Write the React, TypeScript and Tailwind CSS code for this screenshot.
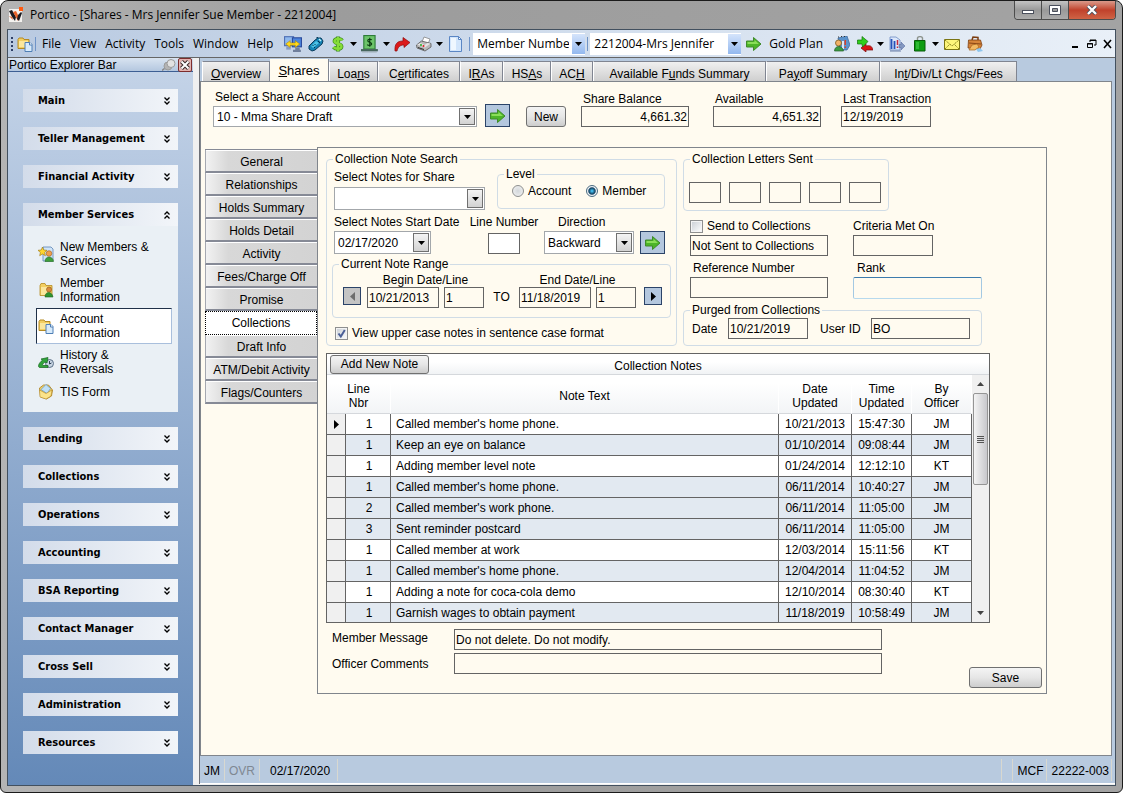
import { useState } from "react";
import type { ReactNode } from "react";
import clsx from "clsx";

const explorerTop = ["Main", "Teller Management", "Financial Activity"];

const explorerBottom = [
  "Lending",
  "Collections",
  "Operations",
  "Accounting",
  "BSA Reporting",
  "Contact Manager",
  "Cross Sell",
  "Administration",
  "Resources",
];

// "_" goes before the access key letter
const pageTabs = [
  { label: "_Overview", width: "w-[68px]" },
  { label: "_Shares", width: "w-[59px]" },
  { label: "Loa_ns", width: "w-[49px]" },
  { label: "C_ertificates", width: "w-[82px]" },
  { label: "I_RAs", width: "w-[43px]" },
  { label: "HS_As", width: "w-[48px]" },
  { label: "AC_H", width: "w-[42px]" },
  { label: "Available F_unds Summary", width: "w-[173px]" },
  { label: "Pa_yoff Summary", width: "w-[114px]" },
  { label: "In_t/Div/Lt Chgs/Fees", width: "w-[137px]" },
];

const sideTabs = [
  "General",
  "Relationships",
  "Holds Summary",
  "Holds Detail",
  "Activity",
  "Fees/Charge Off",
  "Promise",
  "Collections",
  "Draft Info",
  "ATM/Debit Activity",
  "Flags/Counters",
];

const notes = [
  { line: 1, text: "Called member's home phone.", date: "10/21/2013", time: "15:47:30", by: "JM" },
  { line: 1, text: "Keep an eye on balance", date: "01/10/2014", time: "09:08:44", by: "JM", shaded: true },
  { line: 1, text: "Adding member level note", date: "01/24/2014", time: "12:12:10", by: "KT" },
  { line: 1, text: "Called member's home phone.", date: "06/11/2014", time: "10:40:27", by: "JM", shaded: true },
  { line: 2, text: "Called member's work phone.", date: "06/11/2014", time: "11:05:00", by: "JM", shaded: true },
  { line: 3, text: "Sent reminder postcard", date: "06/11/2014", time: "11:05:00", by: "JM", shaded: true },
  { line: 1, text: "Called member at work", date: "12/03/2014", time: "15:11:56", by: "KT" },
  { line: 1, text: "Called member's home phone.", date: "12/04/2014", time: "11:04:52", by: "JM", shaded: true },
  { line: 1, text: "Adding a note for coca-cola demo", date: "12/10/2014", time: "08:30:40", by: "KT" },
  { line: 1, text: "Garnish wages to obtain payment", date: "11/18/2019", time: "10:58:49", by: "JM", shaded: true },
];

/* ---------- icons ---------- */

function Icon({ children, className }: { children: ReactNode; className?: string }) {
  return (
    <svg viewBox="0 0 16 16" className={clsx("shrink-0", className ?? "size-4")} aria-hidden="true">
      {children}
    </svg>
  );
}

function PorticoLogo() {
  return (
    <Icon>
      <rect x="0" y="2" width="13" height="13" fill="#f4f2ef" />
      <path d="M0 4l3-1 4 7-1 4-3-4z" fill="#1c1c22" />
      <path d="M4 5l3-1 3 6-1 4z" fill="#e8632a" />
      <path d="M12 5l1 1-3 8-2-2 1-4z" fill="#1c1c22" />
      <path d="M0 9l3 1 1 3z" fill="#e8632a" />
      <rect x="10" y="0" width="4" height="4" fill="#ff5a10" />
    </Icon>
  );
}

function FolderPageIcon() {
  return (
    <Icon>
      <path d="M1 3.500l1-1.500h4l1 1.500h5v9H1z" fill="#f3cf62" stroke="#b58a22" />
      <path d="M2 5h9v6H2z" fill="#fbe79c" />
      <path d="M8 6.500h5l2 2v7H8z" fill="#d8ebfb" stroke="#4f7fb5" />
      <path d="M12.500 6.500v2.500H15" fill="#fff" stroke="#4f7fb5" />
    </Icon>
  );
}

function MonitorsIcon() {
  return (
    <Icon className="size-[18px]">
      <rect x="0.500" y="1.500" width="8" height="8" fill="#8fb9ee" stroke="#4e6fb4" />
      <rect x="7.500" y="2.500" width="8" height="8" fill="#4d86dd" stroke="#2c4c9c" />
      <path d="M10 11h4v2h1v2H8v-2h2z" fill="#6f7f9c" />
      <path d="M2 10h4v3H2z" fill="#8a9cc0" />
      <path d="M1.500 8l4-3v2h4.500V5l4 3-4 3V9H5.500v2z" fill="#ffd91a" stroke="#a98300" strokeWidth="0.500" />
    </Icon>
  );
}

function PhoneIcon() {
  return (
    <Icon>
      <path d="M1 10l6-6 2-1 0-2 1 1 3 0 2 3-1 3-7 6-3 1-3-2z" fill="#1583b5" stroke="#0b3c5c" />
      <path d="M3 10l5-5 3 2-6 5z" fill="#4fc3e6" />
      <path d="M4.500 9l1 1M6.500 8l1 1M6 11l1 1M10 5l2 2" stroke="#07324d" />
      <path d="M11 3l2 2" stroke="#bdeefa" strokeWidth="1.500" />
    </Icon>
  );
}

function DollarIcon() {
  return (
    <Icon>
      <path
        d="M12 4.500C11 2.500 5 2 4.500 5c-.3 3 7 2 7 5.500 0 3-6 3-8 .5M8 0.500v15"
        fill="none"
        stroke="#3a8a1c"
        strokeWidth="3.800"
      />
      <path
        d="M12 4.500C11 2.500 5 2 4.500 5c-.3 3 7 2 7 5.500 0 3-6 3-8 .5M8 1v14"
        fill="none"
        stroke="#86dd38"
        strokeWidth="2.400"
      />
    </Icon>
  );
}

function CashIcon() {
  return (
    <Icon className="size-[18px]">
      <rect x="2.500" y="0.500" width="10" height="12" fill="#6cc46a" stroke="#2c7b38" />
      <path d="M9.500 4.500C9 3.500 6 3.500 6 5s3.500 1.500 3.500 3S6.500 9.500 5.500 8.500M7.800 2.500v8" fill="none" stroke="#0a3a10" />
      <path d="M0 12.500h15v2H0z" fill="#46665c" />
      <path d="M1 15h13" stroke="#9aaab0" />
    </Icon>
  );
}

function RedArrowIcon() {
  return (
    <Icon>
      <path d="M1 15c-.5-7 2-10 8-10V1.500l7 5-6 5V9C6 9 4 11 3 15z" fill="#dc1a1a" stroke="#8c0a0a" strokeWidth="0.7" />
    </Icon>
  );
}

function PrinterIcon() {
  return (
    <Icon>
      <path d="M6 6l2-5 6 2-2 5z" fill="#fff" stroke="#777" strokeWidth="0.7" />
      <path d="M0.500 9l5-4 9.500 2.500v3.500l-6 4-8-3z" fill="#b9b9b9" stroke="#555" strokeWidth="0.8" />
      <path d="M1 8.500l8 3 5.500-4-3-.5-3 2-4-2z" fill="#e4e4e4" />
      <path d="M2 11.500l6 2" stroke="#333" />
      <circle cx="5" cy="9" r="1" fill="#2a2" />
      <circle cx="7.500" cy="10" r="1" fill="#d22" />
    </Icon>
  );
}

function BlankPageIcon() {
  return (
    <Icon>
      <path d="M2.500 0.500h9l3 3v12h-12z" fill="#d2e5fb" stroke="#5a86c4" />
      <path d="M4 2h5v12H4z" fill="#eff7ff" />
      <path d="M11.500 0.500v3h3z" fill="#fff" stroke="#5a86c4" />
    </Icon>
  );
}

function GreenArrowIcon() {
  return (
    <Icon>
      <path d="M0.500 5h7V1.500L15 8l-7.500 6.500V11h-7z" fill="#4db528" stroke="#3f8a2a" />
      <path d="M1.500 6h7V4L13 8H1.500z" fill="#8ade58" />
    </Icon>
  );
}

function ContactIcon() {
  return (
    <Icon>
      <path d="M4 2l9-2 3 9-3 5H6z" fill="#5b93cc" stroke="#3a6498" strokeWidth="0.7" />
      <path d="M4 1h1M7 0.500h1M10 0.500h1" stroke="#333" />
      <path d="M8 5h2v8H8z" fill="#d6e7f8" />
      <path d="M10.500 4h1.500v5h-1.500zM10.500 10.500h1.500V12h-1.500z" fill="#d8402c" />
      <circle cx="4.500" cy="7" r="3" fill="#f2b268" stroke="#7c5a1c" strokeWidth="0.8" />
      <path d="M0.500 15c0-6 8-6 9 0z" fill="#3d9b41" stroke="#1f5f26" strokeWidth="0.7" />
    </Icon>
  );
}

function TransferIcon() {
  return (
    <Icon>
      <path d="M16 14H9v2l-5-4 5-4.500V10c4-1 6 0 7 4z" fill="#d81414" stroke="#7d0808" strokeWidth="0.7" />
      <path d="M0.500 4H5V0.500L11 5.500 5.500 11 5 8H0.500z" fill="#2fd01c" stroke="#147008" strokeWidth="0.7" />
    </Icon>
  );
}

function ChartIcon() {
  return (
    <Icon>
      <path d="M1 1h6l4 3v10H1z" fill="#dbe7fa" stroke="#6d8cc2" strokeWidth="0.8" />
      <path d="M2.500 3v10M5.500 5v8" stroke="#2650b8" strokeWidth="1.800" />
      <path d="M8.500 4v5M8.500 10.500V12" stroke="#c8283c" strokeWidth="1.500" />
      <path d="M10 8.500h2V6l4 4-4 4v-2.500h-2z" fill="#8397c0" stroke="#4c639a" strokeWidth="0.5" />
      <path d="M1 15h11" stroke="#6c80a8" />
    </Icon>
  );
}

function BagIcon() {
  return (
    <Icon>
      <path d="M5.500 5V2C6 .2 10 .2 10.500 2V5" fill="none" stroke="#8d948d" strokeWidth="1.400" />
      <path d="M2.500 4.500h10.500V15H2.500z" fill="#0d9c12" stroke="#075c07" />
      <path d="M4 6h3v7H4z" fill="#2fba34" />
    </Icon>
  );
}

function EnvelopeIcon() {
  return (
    <Icon>
      <path d="M0.500 3.500h15v10H0.500z" fill="#fdf67a" stroke="#7a7414" />
      <path d="M1 4l7 6 7-6M1 13l5-5M15 13l-5-5" fill="none" stroke="#8d8620" strokeDasharray="1.500 0.700" />
    </Icon>
  );
}

function BriefcaseIcon() {
  return (
    <Icon>
      <path d="M5 4l1-3 5 0.500v3" fill="none" stroke="#7c3d10" strokeWidth="1.500" />
      <path d="M1.500 4l12 0 1.500 5-2 4L1 12z" fill="#d6853a" stroke="#7c3d10" strokeWidth="0.8" />
      <path d="M2 7l12 1" stroke="#8a4716" />
      <path d="M2 14l3-5 5-1 2 3-4 3z" fill="#f2ba64" stroke="#a8641c" strokeWidth="0.7" />
      <path d="M9 13l4-1 3 3-5 1z" fill="#8ec6ee" />
    </Icon>
  );
}

function NewMemberIcon() {
  return (
    <Icon>
      <path d="M5 1h8l2 2v12H5z" fill="#cfe4f8" stroke="#5a83b4" strokeWidth="0.8" />
      <circle cx="11" cy="7.500" r="2.800" fill="#ef9d4c" stroke="#a35f1b" strokeWidth="0.6" />
      <path d="M7 15.500c0-6 8-6 8.500 0z" fill="#3f9f3a" stroke="#236b22" strokeWidth="0.6" />
      <path
        d="M4.500 1l1.300 3 3.200.3-2.400 2.200.8 3.200-2.900-1.700-2.800 1.700.7-3.200L0 4.300 3.200 4z"
        fill="#ffd52e"
        stroke="#9a7410"
        strokeWidth="0.6"
      />
    </Icon>
  );
}

function MemberFolderIcon() {
  return (
    <Icon>
      <path d="M2 3.500l1-2h4l1 2h6v10H2z" fill="#f3cf62" stroke="#b58a22" strokeWidth="0.8" />
      <path d="M3 5h8v8H3z" fill="#fbe79c" />
      <circle cx="11" cy="7.500" r="2.500" fill="#d98b3d" stroke="#8e5215" strokeWidth="0.6" />
      <path d="M7 15c0-6 7-6 8 0z" fill="#2f9430" stroke="#1c631e" strokeWidth="0.6" />
    </Icon>
  );
}

function HistoryIcon() {
  return (
    <Icon>
      <circle cx="11.500" cy="9.500" r="4" fill="#c9d6e4" stroke="#5b6f86" />
      <path d="M11.500 7v3l2-1" fill="none" stroke="#2f4258" />
      <path
        d="M10 13.500H1.500c-2-1-1-4 3-7.500L3 5l7-1.500-1 5.500-2-1C4.500 9.500 4 11.500 5 11.500h5z"
        fill="#32a53c"
        stroke="#14641c"
        strokeWidth="0.7"
      />
    </Icon>
  );
}

function TisFormIcon() {
  return (
    <Icon>
      <path d="M1.500 4l4-3 5 0 4 5-1 6-5 3-6-2z" fill="#f3cf62" stroke="#a97d1c" strokeWidth="0.8" />
      <path d="M8 0.500l4.500 4-3.500 5-6-4z" fill="#bfe0f7" stroke="#6f9fc8" strokeWidth="0.8" />
      <path d="M1.500 6l6.500 3.500 6-3.500-1 6-5 3-6-2z" fill="#fbe38a" stroke="#a97d1c" strokeWidth="0.5" />
    </Icon>
  );
}

function Caret({ className }: { className?: string }) {
  return (
    <svg viewBox="0 0 7 4" className={clsx("h-1 w-[7px] shrink-0", className)} aria-hidden="true">
      <path d="M0 0h7L3.500 4z" fill="currentColor" />
    </svg>
  );
}

function Chevrons({ up }: { up?: boolean }) {
  return (
    <svg viewBox="0 0 6 8" className={clsx("h-2 w-[6px]", up && "rotate-180")} aria-hidden="true">
      <path d="M0.500 0.500L3 3 5.500 0.500M0.500 4.500L3 7 5.500 4.500" fill="none" stroke="#000" strokeWidth="1.300" />
    </svg>
  );
}

/* ---------- controls ---------- */

interface FieldProps {
  id: string;
  value?: string;
  label?: string;
  className?: string;
}

function Field({ id, value = "", label, className }: FieldProps) {
  return (
    <input
      id={id}
      type="text"
      defaultValue={value}
      aria-label={label}
      className={clsx("h-[21px] border border-[#646464] px-px outline-none", className)}
    />
  );
}

function Select({ id, value = "", label, className }: FieldProps) {
  return (
    <div className={clsx("relative border border-[#a3a7ab] bg-white", className)}>
      <select id={id} aria-label={label} className="h-full w-full appearance-none bg-transparent pr-5 pl-[3px] outline-none">
        <option>{value}</option>
      </select>
      <span className="pointer-events-none absolute inset-y-px right-px flex w-4 items-center justify-center border border-[#707070] bg-linear-to-b from-[#f4f4f4] to-[#d2d2d2]">
        <Caret />
      </span>
    </div>
  );
}

function ToolbarSelect({ value, label, className }: { value: string; label: string; className: string }) {
  return (
    <div className={clsx("relative h-[22px] bg-white", className)}>
      <select aria-label={label} className="h-full w-full appearance-none bg-transparent pr-4 pl-1 outline-none">
        <option>{value}</option>
      </select>
      <span className="pointer-events-none absolute inset-y-px right-0 flex w-[13px] items-center justify-center bg-linear-to-b from-[#d5e4fb] to-[#93b8ee]">
        <Caret />
      </span>
    </div>
  );
}

function PushButton({ children, className }: { children: ReactNode; className?: string }) {
  return (
    <button
      type="button"
      className={clsx(
        "rounded-[3px] border border-[#707070] bg-linear-to-b from-[#f4f4f4] via-[#e6e6e6] to-[#cdcdcd]",
        className,
      )}
    >
      {children}
    </button>
  );
}

function GoButton({ label }: { label: string }) {
  return (
    <button
      type="button"
      aria-label={label}
      className="flex h-[23px] w-[25px] shrink-0 items-center justify-center border border-[#2b4368] bg-[#b4c7de]"
    >
      <GreenArrowIcon />
    </button>
  );
}

function StepButton({ label, back }: { label: string; back?: boolean }) {
  return (
    <button
      type="button"
      aria-label={label}
      disabled={back}
      className={clsx(
        "mb-[3px] flex size-[18px] shrink-0 items-center justify-center border border-[#2b4368]",
        back ? "bg-[#c4c4c4] text-[#6d6d6d]" : "bg-[#b4c7de] text-black",
      )}
    >
      <svg viewBox="0 0 5 9" className={clsx("h-[9px] w-[5px]", back && "rotate-180")} aria-hidden="true">
        <path d="M0 0v9l5-4.500z" fill="currentColor" />
      </svg>
    </button>
  );
}

function Group({ title, className, children }: { title: string; className?: string; children: ReactNode }) {
  return (
    <fieldset className={clsx("rounded-[4px] border border-[#d0dce6]", className)}>
      <legend className="ml-[6px] px-[2px]">{title}</legend>
      {children}
    </fieldset>
  );
}

function CheckBox({ id, children, checked = false }: { id: string; children: ReactNode; checked?: boolean }) {
  return (
    <div className="flex items-center gap-1">
      <span className="relative size-[13px]">
        <input
          id={id}
          type="checkbox"
          defaultChecked={checked}
          className="peer block size-[13px] appearance-none border border-[#8e8f8f] bg-linear-to-br from-[#c9ced4] to-white shadow-[inset_0_0_0_1px_#f4f4f4]"
        />
        <svg
          viewBox="0 0 13 13"
          className="pointer-events-none absolute inset-0 hidden peer-checked:block"
          aria-hidden="true"
        >
          <path d="M3.500 6.500l2.300 3L9.800 3" fill="none" stroke="#4b5f97" strokeWidth="2" />
        </svg>
      </span>
      <label htmlFor={id}>{children}</label>
    </div>
  );
}

function Radio({ id, children, checked = false }: { id: string; children: ReactNode; checked?: boolean }) {
  return (
    <div className="flex items-center gap-1">
      <input
        id={id}
        name="level"
        type="radio"
        defaultChecked={checked}
        className="size-3 appearance-none rounded-full border border-[#8e8f8f] bg-radial from-[#d3d7db] to-[#f4f4f4] checked:border-[#4a6a80] checked:from-[#3fb4e4] checked:from-10% checked:via-[#12405f] checked:via-45% checked:to-[#eef3f6] checked:to-60%"
      />
      <label htmlFor={id}>{children}</label>
    </div>
  );
}

/* ---------- window chrome ---------- */

function TitleBar() {
  return (
    <header className="flex h-7 items-start justify-between">
      <div className="flex h-7 items-center gap-[5px] pl-[2px] font-['Open_Sans',sans-serif] text-[12px]">
        <PorticoLogo />
        <h1>Portico - [Shares - Mrs Jennifer Sue Member - 2212004]</h1>
      </div>
      <div className="flex h-[19px] overflow-hidden rounded-b-[4px] border border-t-0 border-[#4c4c4c]">
        <button
          type="button"
          aria-label="Minimize"
          className="flex w-[27px] items-center justify-center border-r border-[#4c4c4c] bg-linear-to-b from-[#c4c4c4] via-[#999] to-[#ababab] pt-1"
        >
          <span className="h-1 w-3 border border-[#4a4f5c] bg-white" />
        </button>
        <button
          type="button"
          aria-label="Restore"
          className="flex w-[27px] items-center justify-center border-r border-[#4c4c4c] bg-linear-to-b from-[#c4c4c4] via-[#999] to-[#ababab]"
        >
          <svg viewBox="0 0 12 10" className="h-[10px] w-3" aria-hidden="true">
            <path d="M0.500 0.500h11v9H0.500z" fill="#fff" stroke="#4a4f5c" />
            <path d="M3.500 3.500h5v3h-5z" fill="#999" stroke="#4a4f5c" />
          </svg>
        </button>
        <button
          type="button"
          aria-label="Close"
          className="flex w-[46px] items-center justify-center bg-linear-to-b from-[#d9998a] via-[#c0412b] to-[#cf6345]"
        >
          <svg viewBox="0 0 12 10" className="h-[10px] w-3" aria-hidden="true">
            <path d="M2 1l8 8M10 1L2 9" stroke="#4a4f5c" strokeWidth="4" />
            <path d="M2 1l8 8M10 1L2 9" stroke="#fff" strokeWidth="2.400" />
          </svg>
        </button>
      </div>
    </header>
  );
}

function ToolButton({ label, menu, children }: { label: string; menu?: boolean; children: ReactNode }) {
  return (
    <button type="button" aria-label={label} className={clsx("flex items-center gap-1", menu && "-mr-[2px]")}>
      {children}
      {menu && <Caret className="w-[6px]" />}
    </button>
  );
}

function Toolbar() {
  return (
    <div className="flex h-7 items-center border-b border-[#666] bg-linear-to-r from-[#b9cae1] to-[#e9f0f8] pr-[2px] pl-[3px] font-['Open_Sans',sans-serif] text-[12px]">
      <span className="h-[14px] border-l-2 border-dotted border-[#2e3f66]" />
      <div className="ml-1 flex items-center">
        <FolderPageIcon />
      </div>
      <span className="ml-[2px] h-[14px] w-px bg-[#6f94c8]" />
      <nav className="ml-[6px] flex gap-[9px]">
        {["File", "View", "Activity", "Tools", "Window", "Help"].map((item) => (
          <button key={item} type="button">
            {item}
          </button>
        ))}
      </nav>
      <div className="ml-[11px] flex items-center gap-[6px]">
        <ToolButton label="Workstations"><MonitorsIcon /></ToolButton>
        <ToolButton label="Phone"><PhoneIcon /></ToolButton>
        <ToolButton label="Dollars" menu><DollarIcon /></ToolButton>
        <ToolButton label="Cash" menu><CashIcon /></ToolButton>
        <ToolButton label="Forward"><RedArrowIcon /></ToolButton>
        <ToolButton label="Print" menu><PrinterIcon /></ToolButton>
        <ToolButton label="New page"><BlankPageIcon /></ToolButton>
      </div>
      <span className="ml-[6px] h-[14px] w-px bg-[#6f94c8]" />
      <ToolbarSelect label="Search by" value="Member Numbe" className="ml-[3px] w-[112px]" />
      <span className="mx-[2px] h-[14px] w-px bg-[#6f94c8]" />
      <ToolbarSelect label="Member" value="2212004-Mrs Jennifer" className="w-[151px]" />
      <div className="ml-[5px] flex items-center">
        <ToolButton label="Go to member"><GreenArrowIcon /></ToolButton>
      </div>
      <button type="button" className="ml-[7px] whitespace-nowrap">Gold Plan</button>
      <div className="ml-[11px] flex items-center gap-[7px]">
        <ToolButton label="Contact"><ContactIcon /></ToolButton>
        <ToolButton label="Transfer" menu><TransferIcon /></ToolButton>
        <ToolButton label="Reports"><ChartIcon /></ToolButton>
        <ToolButton label="Products" menu><BagIcon /></ToolButton>
        <ToolButton label="Messages"><EnvelopeIcon /></ToolButton>
        <ToolButton label="Accounts"><BriefcaseIcon /></ToolButton>
      </div>
      <svg viewBox="0 0 42 12" className="ml-auto h-3 w-[42px] shrink-0" aria-hidden="true">
        <path d="M1 9h6" stroke="#000" strokeWidth="2" />
        <path d="M19 4V2h6v5h-2M19 2.500h6M16.500 5.500h5v4h-5zM16 6h6" fill="none" stroke="#000" />
        <path d="M33 2l7 8M40 2l-7 8" stroke="#000" strokeWidth="1.600" />
      </svg>
    </div>
  );
}

/* ---------- explorer bar ---------- */

function ExplorerHeading({ title, open }: { title: string; open?: boolean }) {
  return (
    <button
      type="button"
      aria-expanded={!!open}
      className="flex h-[23px] w-full items-center justify-between bg-linear-to-r from-[#d3dcea] to-[#f2f5f9] pr-2 pl-[15px] font-['DejaVu_Sans_Condensed','DejaVu_Sans',sans-serif] text-[11px] font-bold"
    >
      {title}
      <Chevrons up={open} />
    </button>
  );
}

function ExplorerLink({ icon, active, children }: { icon: ReactNode; active?: boolean; children: ReactNode }) {
  return (
    <a
      href="#"
      className={clsx(
        "flex min-h-[22px] items-center gap-[6px] border py-[3px] pl-[1px]",
        active ? "border-[#a9bfdc] border-t-[#1f3048] border-l-[#1f3048] bg-white" : "border-transparent",
      )}
    >
      {icon}
      <span className="w-[100px]">{children}</span>
    </a>
  );
}

function ExplorerBar() {
  return (
    <aside className="flex w-[185px] shrink-0 flex-col bg-linear-to-b from-[#c5d4e8] to-[#6489b8]">
      <div className="flex h-[14px] items-center justify-between border-b border-[#3d5f93] bg-linear-to-b from-[#d9e4f1] to-[#b4c7df] px-px">
        <h2>Portico Explorer Bar</h2>
        <div className="flex items-center gap-[2px]">
          <svg viewBox="0 0 14 12" className="h-3 w-[14px]" aria-hidden="true">
            <path d="M0 11.500l5-4" stroke="#8a8a8a" strokeWidth="1.500" />
            <ellipse cx="6" cy="7" rx="4" ry="4" fill="#b4b4b4" stroke="#9b9b9b" />
            <circle cx="9" cy="4.500" r="4" fill="#e2e2e2" stroke="#9b9b9b" />
          </svg>
          <button
            type="button"
            aria-label="Close explorer bar"
            className="flex size-[14px] items-center justify-center rounded-[2px] border border-[#7c2d2d] bg-[#e2b3b0]"
          >
            <svg viewBox="0 0 10 10" className="size-[10px]" aria-hidden="true">
              <path d="M1.500 1.500l7 7M8.500 1.500l-7 7" stroke="#3a2a2a" strokeWidth="4" />
              <path d="M1.500 1.500l7 7M8.500 1.500l-7 7" stroke="#fff" strokeWidth="2" />
            </svg>
          </button>
        </div>
      </div>

      <div className="flex flex-col gap-[15px] px-[15px] pt-[17px] pb-6">
        {explorerTop.map((title) => (
          <ExplorerHeading key={title} title={title} />
        ))}
        <section>
          <ExplorerHeading title="Member Services" open />
          <nav className="bg-[#eaf0f5] px-[6px] pt-[10px] pb-2 pl-[13px]">
            <ExplorerLink icon={<NewMemberIcon />}>New Members & Services</ExplorerLink>
            <ExplorerLink icon={<MemberFolderIcon />}>Member<br />Information</ExplorerLink>
            <ExplorerLink icon={<FolderPageIcon />} active>Account<br />Information</ExplorerLink>
            <ExplorerLink icon={<HistoryIcon />}>History &<br />Reversals</ExplorerLink>
            <ExplorerLink icon={<TisFormIcon />}>TIS Form</ExplorerLink>
          </nav>
        </section>
        {explorerBottom.map((title) => (
          <ExplorerHeading key={title} title={title} />
        ))}
      </div>
    </aside>
  );
}

/* ---------- shares page ---------- */

function PageTabs() {
  return (
    <div role="tablist" className="flex h-[23px] items-end pl-[2px]">
      {pageTabs.map(({ label, width }) => {
        const [before, after] = label.split("_");
        const active = label === "_Shares";
        return (
          <button
            key={label}
            role="tab"
            type="button"
            aria-selected={active}
            className={clsx(
              "shrink-0 border-r border-[#808591] whitespace-nowrap",
              width,
              active
                ? "h-[22px] bg-[#fffbf0] pt-px text-[13px]"
                : "h-5 border-t border-l border-l-white bg-linear-to-b from-[#f0f0f0] to-[#cfcfcf] pt-1",
            )}
          >
            {before}
            <u>{after[0]}</u>
            {after.slice(1)}
          </button>
        );
      })}
    </div>
  );
}

function AccountSummary() {
  return (
    <div className="flex items-end pl-3">
      <div className="flex flex-col">
        <label htmlFor="share-account" className="mb-[2px] pl-[2px]">Select a Share Account</label>
        <Select id="share-account" value="10 - Mma Share Draft" className="h-[21px] w-[264px]" />
      </div>
      <div className="ml-2">
        <GoButton label="Open share account" />
      </div>
      <PushButton className="ml-4 h-[21px] w-10">New</PushButton>
      <div className="ml-[15px] flex flex-col">
        <label htmlFor="balance" className="pl-[2px]">Share Balance</label>
        <Field id="balance" value="4,661.32" className="w-[108px] text-right" />
      </div>
      <div className="ml-6 flex flex-col">
        <label htmlFor="available" className="pl-[2px]">Available</label>
        <Field id="available" value="4,651.32" className="w-[108px] text-right" />
      </div>
      <div className="ml-5 flex flex-col">
        <label htmlFor="last-transaction" className="pl-[2px]">Last Transaction</label>
        <Field id="last-transaction" value="12/19/2019" className="w-[90px]" />
      </div>
    </div>
  );
}

function SideTabs({ active, onSelect }: { active: string; onSelect: (tab: string) => void }) {
  return (
    <div role="tablist" aria-orientation="vertical" className="mt-[2px] flex w-28 shrink-0 flex-col border-t border-[#868a96]">
      {sideTabs.map((tab) => (
        <button
          key={tab}
          type="button"
          role="tab"
          aria-selected={tab === active}
          onClick={() => onSelect(tab)}
          className={clsx(
            tab === active
              ? "h-6 border border-dotted border-black bg-white"
              : "h-[23px] border-b-2 border-l border-[#868a96] border-l-[#a5a8b0] bg-linear-to-r from-[#f2f2f2] via-[#d8d8d8] via-20% to-[#d3d3d3] pt-[3px] shadow-[inset_0_1px_0_#fff]",
          )}
        >
          {tab}
        </button>
      ))}
    </div>
  );
}

function NoteSearch() {
  return (
    <Group title="Collection Note Search" className="w-[351px]">
      <div className="px-[5px] pt-px pb-[5px]">
        <div className="flex justify-between pr-[6px] pl-[2px]">
          <div className="flex flex-col gap-[3px] pt-[3px]">
            <label htmlFor="notes-share">Select Notes for Share</label>
            <Select id="notes-share" className="h-[23px] w-[151px]" />
          </div>
          <Group title="Level" className="h-[42px] w-[168px]">
            <div className="flex gap-[15px] pt-[3px] pl-[14px]">
              <Radio id="level-account">Account</Radio>
              <Radio id="level-member" checked>Member</Radio>
            </div>
          </Group>
        </div>

        <div className="mt-[5px] flex items-end pl-[2px]">
          <div className="flex w-[130px] flex-col gap-[2px]">
            <label htmlFor="start-date">Select Notes Start Date</label>
            <Select id="start-date" value="02/17/2020" className="h-[23px] w-[97px]" />
          </div>
          <div className="flex w-20 flex-col items-center gap-1">
            <label htmlFor="line-number">Line Number</label>
            <Field id="line-number" className="w-8 bg-white" />
          </div>
          <div className="flex flex-col gap-[2px]">
            <label htmlFor="direction" className="pl-[14px]">Direction</label>
            <Select id="direction" value="Backward" className="h-[23px] w-[90px]" />
          </div>
          <div className="ml-[6px]">
            <GoButton label="Search notes" />
          </div>
        </div>

        <Group title="Current Note Range" className="mt-[3px] h-[61px]">
          <div className="flex items-end pt-[2px] pl-[10px]">
            <StepButton label="Previous notes" back />
            <div className="ml-[6px] flex flex-col">
              <label htmlFor="begin-date" className="text-center">Begin Date/Line</label>
              <div className="flex gap-[5px]">
                <Field id="begin-date" value="10/21/2013" className="w-[72px]" />
                <Field id="begin-line" label="Begin line" value="1" className="w-10" />
              </div>
            </div>
            <span className="w-[35px] pb-1 text-center">TO</span>
            <div className="flex flex-col">
              <label htmlFor="end-date" className="text-center">End Date/Line</label>
              <div className="flex gap-[5px]">
                <Field id="end-date" value="11/18/2019" className="w-[72px]" />
                <Field id="end-line" label="End line" value="1" className="w-10" />
              </div>
            </div>
            <div className="ml-2">
              <StepButton label="Next notes" />
            </div>
          </div>
        </Group>

        <div className="mt-2 pl-[3px]">
          <CheckBox id="sentence-case" checked>View upper case notes in sentence case format</CheckBox>
        </div>
      </div>
    </Group>
  );
}

function CollectionStatus() {
  return (
    <div className="w-[299px]">
      <Group title="Collection Letters Sent" className="h-[59px] w-[206px]">
        <div className="flex gap-2 pt-4 pl-[5px]">
          {[1, 2, 3, 4, 5].map((n) => (
            <Field key={n} id={`letter-${n}`} label={`Letter ${n}`} className="w-8" />
          ))}
        </div>
      </Group>

      <div className="mt-2 grid grid-cols-[163px_129px] gap-y-[5px] pl-[7px]">
        <div className="flex flex-col gap-[2px]">
          <CheckBox id="send-collections">Send to Collections</CheckBox>
          <Field id="sent-status" label="Collections status" value="Not Sent to Collections" className="w-[138px]" />
        </div>
        <div className="flex flex-col gap-[2px]">
          <label htmlFor="criteria">Criteria Met On</label>
          <Field id="criteria" className="w-20" />
        </div>
        <div className="flex flex-col gap-[2px]">
          <label htmlFor="reference" className="pl-[3px]">Reference Number</label>
          <Field id="reference" className="w-[138px]" />
        </div>
        <div className="flex flex-col gap-[2px]">
          <label htmlFor="rank" className="pl-1">Rank</label>
          <input
            id="rank"
            type="text"
            className="h-[22px] w-full rounded-[2px] border border-t-[#3d7bad] border-r-[#a4c9e3] border-b-[#b7d9ed] border-l-[#a4c9e3] px-px outline-none"
          />
        </div>
      </div>

      <Group title="Purged from Collections" className="mt-1 h-[43px]">
        <div className="flex items-center pt-px pl-2">
          <label htmlFor="purged-date" className="w-9">Date</label>
          <Field id="purged-date" value="10/21/2019" className="w-20" />
          <label htmlFor="user-id" className="ml-3 w-[51px]">User ID</label>
          <Field id="user-id" value="BO" className="w-[99px]" />
        </div>
      </Group>
    </div>
  );
}

function NotesGrid() {
  const head = "h-[39px] border-b border-[#d5d8dc] border-r border-r-white pt-[3px] font-normal";
  const cell = "h-[21px] border-r border-b border-[#646464] text-center group-last:h-[19px] group-last:border-b-0";
  return (
    <div className="mt-[7px] mr-14 ml-2 border border-[#646464] bg-white">
      <div className="relative flex h-[21px] items-center border-b border-[#d5d8dc] bg-linear-to-b from-white from-40% to-[#f1f3f5] pl-[3px]">
        <PushButton className="h-[19px] w-[99px]">Add New Note</PushButton>
        <h3 className="pointer-events-none absolute inset-x-0 pt-1 text-center">Collection Notes</h3>
      </div>
      <div className="flex">
        <table className="flex-1 table-fixed border-separate border-spacing-0">
          <colgroup>
            <col className="w-[19px]" />
            <col className="w-[45px]" />
            <col />
            <col className="w-[73px]" />
            <col className="w-[60px]" />
            <col className="w-[60px]" />
          </colgroup>
          <thead className="bg-linear-to-b from-white from-20% to-[#f2f4f6]">
            <tr>
              <th colSpan={2} className={head}>Line<br />Nbr</th>
              <th className={head}>Note Text</th>
              <th className={head}>Date<br />Updated</th>
              <th className={head}>Time<br />Updated</th>
              <th className={head}>By<br />Officer</th>
            </tr>
          </thead>
          <tbody>
            {notes.map((note, i) => (
              <tr key={i} className={clsx("group", note.shaded ? "bg-[#e2e9f1]" : "bg-white")}>
                <td className={clsx(cell, "bg-[#f0f0f0]")}>
                  {i === 0 && (
                    <svg viewBox="0 0 5 9" className="mx-auto h-[9px] w-[5px]" aria-hidden="true">
                      <path d="M0 0v9l5-4.500z" />
                    </svg>
                  )}
                </td>
                <td className={clsx(cell, "pl-[2px]")}>{note.line}</td>
                <td className={clsx(cell, "pl-[5px] text-left!")}>{note.text}</td>
                <td className={cell}>{note.date}</td>
                <td className={cell}>{note.time}</td>
                <td className={cell}>{note.by}</td>
              </tr>
            ))}
          </tbody>
        </table>
        <div className="flex w-[17px] shrink-0 flex-col items-center bg-[#f0f0f0] px-px">
          <span className="flex h-[18px] items-center text-[#444]">
            <Caret className="rotate-180" />
          </span>
          <div className="flex h-[92px] w-full flex-col items-center justify-center gap-[1px] rounded-[2px] border border-[#959595] bg-linear-to-r from-[#f4f4f4] to-[#c8c8cc]">
            <span className="h-px w-[7px] bg-[#555]" />
            <span className="h-px w-[7px] bg-[#555]" />
            <span className="h-px w-[7px] bg-[#555]" />
            <span className="h-px w-[7px] bg-[#555]" />
          </div>
          <span className="mt-auto flex h-[18px] items-center text-[#444]">
            <Caret />
          </span>
        </div>
      </div>
    </div>
  );
}

function CollectionsPanel() {
  return (
    <section className="mr-16 flex-1 border border-[#80858c] pt-1">
      <div className="flex gap-[6px] pl-2">
        <NoteSearch />
        <CollectionStatus />
      </div>
      <NotesGrid />
      <div className="mt-[6px] flex items-end justify-between pr-1 pb-[5px] pl-[14px]">
        <div className="mb-[14px] grid grid-cols-[122px_428px] gap-y-[3px]">
          <label htmlFor="member-message" className="pt-[2px]">Member Message</label>
          <Field id="member-message" value="Do not delete. Do not modify." />
          <label htmlFor="officer-comments" className="pt-1">Officer Comments</label>
          <Field id="officer-comments" />
        </div>
        <PushButton className="h-[21px] w-[73px]">Save</PushButton>
      </div>
    </section>
  );
}

function StatusBar() {
  return (
    <footer className="flex h-[28px] items-stretch border-b border-white pt-[3px] pr-[3px] pb-[2px] leading-6">
      <span className="border-r border-[#d8d8d0] px-1">JM</span>
      <span className="border-r border-[#d8d8d0] px-1 text-[#7f8892]">OVR</span>
      <span className="border-r border-[#d8d8d0] pr-[7px] pl-[10px]">02/17/2020</span>
      <span className="ml-auto w-3 border-x border-[#d8d8d0]" />
      <span className="border-r border-[#d8d8d0] pr-[2px] pl-[5px]">MCF</span>
      <span className="border-r border-[#d8d8d0] pr-[2px] pl-[5px]">22222-003</span>
    </footer>
  );
}

export default function App() {
  const [section, setSection] = useState("Collections");

  return (
    <div className="flex min-h-screen flex-col rounded-t-lg rounded-b-[6px] border border-[#1b1b1b] bg-linear-to-r from-[#b4b4b4] via-[#9c9c9c] via-30% to-[#a3a3a3] px-[6px] pb-[6px] font-['Liberation_Sans',Arial,sans-serif] text-[12px] leading-[14px] text-black">
      <TitleBar />
      <div className="flex flex-1 flex-col border border-[#42505f] bg-[#f0f0f0]">
        <Toolbar />
        <div className="flex flex-1">
          <ExplorerBar />
          <main className="mb-px ml-[6px] flex flex-1 flex-col border-l border-[#6d7077] bg-[#b8cadf]">
            <PageTabs />
            <div className="mr-[3px] flex-1 border border-[#80858c] bg-[#fffbf0] pt-2">
              <AccountSummary />
              <div className="mt-5 flex items-start pl-1">
                <SideTabs active={section} onSelect={setSection} />
                <CollectionsPanel />
              </div>
            </div>
            <StatusBar />
          </main>
        </div>
      </div>
    </div>
  );
}
